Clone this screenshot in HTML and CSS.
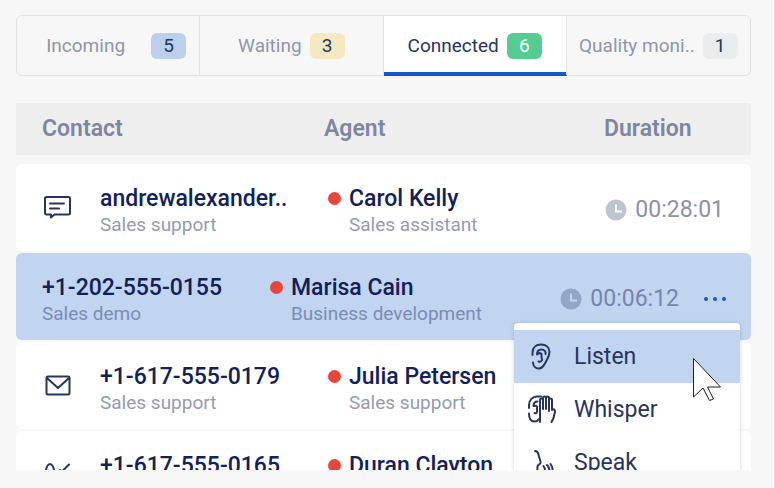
FILE: index.html
```html
<!DOCTYPE html>
<html lang="en">
<head>
<meta charset="utf-8">
<meta name="viewport" content="width=device-width, initial-scale=1">
<title>Connected calls</title>
<link rel="stylesheet" href="styles.css">
</head>
<body>
<main class="panel">
  <nav class="tabs" aria-label="Call status">
    <button class="tab tab-spaced" type="button">Incoming <span class="badge badge-blue">5</span></button>
    <button class="tab" type="button">Waiting <span class="badge badge-yellow">3</span></button>
    <button class="tab tab-active" type="button">Connected <span class="badge badge-green">6</span></button>
    <button class="tab" type="button">Quality moni.. <span class="badge badge-gray">1</span></button>
  </nav>

  <table class="calls">
    <thead>
      <tr class="head"><th>Contact</th><th>Agent</th><th>Duration</th></tr>
    </thead>
    <tbody class="list">
      <tr class="row">
        <td class="channel">
          <svg class="icon" width="32" height="32" viewBox="0 0 32 32"><path d="M4.500 6h22q1.500 0 1.500 1.500v14.500q0 1.500-1.500 1.500H12.500L9 26.500V23.500H4.500Q3 23.500 3 22V7.500Q3 6 4.500 6zM8 12.500h14M8 17.500h9"/></svg>
        </td>
        <td class="contact"><div class="name">andrewalexander..</div><div class="sub">Sales support</div></td>
        <td class="agent"><div class="name">Carol Kelly</div><div class="sub">Sales assistant</div></td>
        <td class="duration">
          <svg class="clock" width="22" height="22" viewBox="0 0 22 22"><circle cx="11" cy="11" r="10.500"/><path d="M11 5.500v7h6"/></svg>
          <span>00:28:01</span>
        </td>
      </tr>
      <tr class="row row-selected">
        <td class="contact"><div class="name">+1-202-555-0155</div><div class="sub">Sales demo</div></td>
        <td class="agent"><div class="name">Marisa Cain</div><div class="sub">Business development</div></td>
        <td class="duration">
          <svg class="clock" width="22" height="22" viewBox="0 0 22 22"><circle cx="11" cy="11" r="10.500"/><path d="M11 5.500v7h6"/></svg>
          <span>00:06:12</span>
          <button class="more" type="button" aria-label="Call actions">
            <svg width="24" height="6" viewBox="0 0 24 6"><circle cx="3" cy="3" r="2"/><circle cx="12" cy="3" r="2"/><circle cx="21" cy="3" r="2"/></svg>
          </button>
          <div class="menu">
            <button class="item item-active" type="button">
              <svg class="icon" width="32" height="32" viewBox="0 0 32 32"><path d="M7.500 14V11.500C7.500 6.500 11 3.500 16 3.500s8.500 3 8.500 7.500c0 4-2 6.500-4 10.500-2 4-3.500 6-6.500 6-3.500 0-6-2.500-6-6"/><path d="M12 13.500c0-3 1.500-5 4.500-5s4.500 2 4 4.500M13 13c1-1.500 4-1 3.500 1.500-.5 2 .5 2.500.5 4s-1.500 2.500-3.500 2"/></svg>
              Listen
              <svg class="pointer" width="32" height="46" viewBox="0 0 32 46"><path d="M1.500 1.500V40l9.500-9 6.500 12.500 4-1.500-6-12H28.500z"/></svg>
            </button>
            <button class="item" type="button">
              <svg class="icon" width="32" height="32" viewBox="0 0 32 32"><path d="M4 14v-3C4 6 7.500 2.500 12 2.500h4M4 19.500c0 5 2 8 5.500 8 2 0 3.500-1 4.500-2.500M8.500 12c0-3 1.500-4.500 4-4.500M9.500 12c2-.5 3 .5 2.500 2s.5 2.500 0 4-1.500 1.500-2.500 1"/><path d="M15 28V6q0-1.500 1.500-1.500T18 6v9V4q0-1.500 1.500-1.500T21 4v11V4q0-1.500 1.500-1.500T24 4v13M24 6q0-1.500 1.500-1.500T27 6v10c2-1.500 3-.5 3 2l-1.500 6-2 4"/></svg>
              Whisper
            </button>
            <button class="item" type="button">
              <svg class="icon" width="32" height="32" viewBox="0 0 32 32"><path d="M10 4c2 0 3 1 3.500 3.500C14 11 16 14 15.500 16c-.5 1.500-3 2-3 3.500s-.5 4 .5 6h4M18.500 19c2 2.500 2 4.500 0 7M22 18c3 3 3 6 0 9M25.500 17c3 4 3 7 0 11"/></svg>
              Speak
            </button>
          </div>
        </td>
      </tr>
      <tr class="row">
        <td class="channel">
          <svg class="icon" width="32" height="32" viewBox="0 0 32 32"><path d="M6 7.500h20q1.500 0 1.500 1.500v15q0 1.500-1.500 1.500H6Q4.500 25.500 4.500 24V9Q4.500 7.500 6 7.500zM5 9l11 10L27 9"/></svg>
        </td>
        <td class="contact"><div class="name">+1-617-555-0179</div><div class="sub">Sales support</div></td>
        <td class="agent"><div class="name">Julia Petersen</div><div class="sub">Sales support</div></td>
        <td class="duration"></td>
      </tr>
      <tr class="row">
        <td class="channel">
          <svg class="icon" width="32" height="32" viewBox="0 0 32 32"><path d="M4 14c0-5 2-8 4-8s4 3 4 8M18 12l2 1.500L27 6.500"/></svg>
        </td>
        <td class="contact"><div class="name">+1-617-555-0165</div></td>
        <td class="agent"><div class="name">Duran Clayton</div></td>
        <td class="duration"></td>
      </tr>
    </tbody>
  </table>
</main>
</body>
</html>
```
FILE: styles.css
```css
* { box-sizing: border-box; }

body {
  margin: 0;
  background: #f7f7f7;
  color: #12215a;
  font-family: Roboto, "Liberation Sans", sans-serif;
  font-size: 23px;
  line-height: 26px;
}

button {
  font: inherit;
  color: inherit;
  border: 0;
  background: none;
  padding: 0;
}

.panel {
  height: 100vh;
  display: flex;
  flex-direction: column;
  gap: 27px;
  padding: 15px 23px 18px 16px;
  border-right: 1px solid #e4e5f3;
}

.tabs {
  flex: none;
  display: grid;
  grid-template-columns: repeat(4, 1fr);
  border: 1px solid #e2e2e2;
  border-radius: 6px;
}

.tab {
  display: flex;
  align-items: center;
  justify-content: center;
  gap: 8px;
  height: 59px;
  font-size: 19px;
  color: #8f95ad;
  white-space: nowrap;
}

.tab:not(:last-child) { border-right: 1px solid #e2e2e2; }

.tab-spaced {
  gap: 26px;
  padding-left: 16px;
}

.tab-active {
  color: #28345f;
  background: #fff;
  box-shadow: inset 0 -3px #1558c8, 0 1px #1558c8;
}

.badge {
  width: 35px;
  border-radius: 6px;
  color: #28345f;
}

.badge-blue { background: #bccfec; }
.badge-yellow { background: #f6e8c3; }
.badge-green { background: #55cd92; color: #fff; }
.badge-gray { background: #e9edf0; }

.calls {
  flex: 1;
  min-height: 0;
  display: flex;
  flex-direction: column;
  gap: 9px;
}

thead { display: block; }
th, td { padding: 0; }

.head {
  display: grid;
  grid-template-columns: 282fr 280fr 120fr;
  padding: 13px 27px 13px 26px;
  border-radius: 2px;
  background: #eee;
  color: #7e86a1;
  text-align: left;
}

th { font-weight: 600; }

.list {
  flex: 1;
  min-height: 0;
  display: flex;
  flex-direction: column;
  gap: 2px;
  overflow: hidden;
}

.row {
  flex: none;
  display: flex;
  padding: 22px 27px 13px 26px;
  border-radius: 6px;
  background: #fff;
}

.row-selected {
  position: relative;
  z-index: 1;
  padding-right: 24px;
  background: #c1d4f0;
}

.channel { width: 58px; padding-top: 5px; }
.contact { width: 228px; }
.agent { flex: 1; padding-left: 21px; }

.name {
  font-weight: 500;
  white-space: nowrap;
}

.agent .name::before {
  content: "";
  display: inline-block;
  width: 13px;
  height: 13px;
  margin: 0 8px 0 -21px;
  border-radius: 50%;
  background: #e8453c;
  vertical-align: 1px;
}

.sub {
  font-size: 19px;
  color: #959bb3;
}

.row-selected .sub { color: #7c8db3; }

.icon {
  flex: none;
  display: block;
  fill: none;
  stroke: #28345f;
  stroke-width: 2;
  stroke-linecap: round;
  stroke-linejoin: round;
}

.duration {
  display: flex;
  align-items: center;
  gap: 8px;
  padding-bottom: 5px;
  color: #8b91a9;
}

.row-selected .duration { color: #7486ad; }

.clock circle { fill: #bfc4d2; }
.clock path { fill: none; stroke: #fff; stroke-width: 2; }
.row-selected .clock circle { fill: #93a6ca; }
.row-selected .clock path { stroke: #c1d4f0; }

.more {
  display: flex;
  margin-left: 16px;
  fill: #1558d6;
}

.menu {
  position: absolute;
  top: 70px;
  right: 11px;
  width: 226px;
  padding: 7px 0;
  border-radius: 4px;
  background: #fff;
  box-shadow: 0 0 4px rgba(30, 50, 100, 0.2);
  color: #28345f;
}

.item {
  position: relative;
  display: flex;
  align-items: center;
  gap: 17px;
  width: 100%;
  height: 53px;
  padding-left: 11px;
}

.item-active { background: #c1d4f0; }

.pointer {
  position: absolute;
  top: 27px;
  right: 16px;
  fill: #fff;
  stroke: #1b1e2e;
  stroke-width: 1;
}
```
